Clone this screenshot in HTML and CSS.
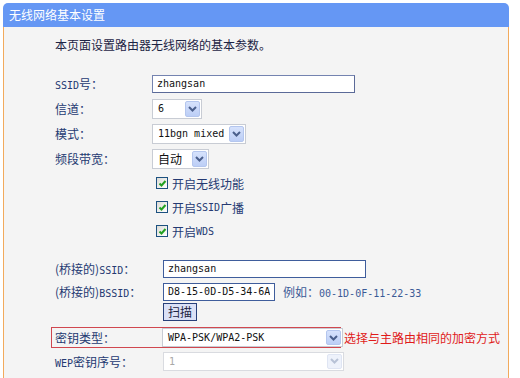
FILE: index.html
```html
<!DOCTYPE html>
<html lang="zh-CN">
<head>
  <meta charset="UTF-8" />
  <meta name="viewport" content="width=device-width, initial-scale=1.0"/>
  <title>无线网络基本设置</title>
  <link rel="stylesheet" href="styles.css">
</head>
<body>

  <div class="panel">
    <div class="panel-title">无线网络基本设置</div>

    <div class="panel-body">
      <p class="intro">本页面设置路由器无线网络的基本参数。</p>

      <div class="row">
        <label class="row-label" for="ssid"><span class="en">SSID</span>号：</label>
        <input class="text-input ssid-input" type="text" id="ssid" value="zhangsan" />
      </div>

      <div class="row">
        <label class="row-label">信道：</label>
        <div class="select channel-select">
          <span class="select-text en">6</span>
          <span class="select-btn"><svg width="9" height="6" viewBox="0 0 9 6"><path d="M1 1 L4.5 4.5 L8 1" fill="none" stroke="#4a5f8c" stroke-width="2"/></svg></span>
        </div>
      </div>

      <div class="row">
        <label class="row-label">模式：</label>
        <div class="select mode-select">
          <span class="select-text en">11bgn mixed</span>
          <span class="select-btn"><svg width="9" height="6" viewBox="0 0 9 6"><path d="M1 1 L4.5 4.5 L8 1" fill="none" stroke="#4a5f8c" stroke-width="2"/></svg></span>
        </div>
      </div>

      <div class="row">
        <label class="row-label">频段带宽：</label>
        <div class="select band-select">
          <span class="select-text">自动</span>
          <span class="select-btn"><svg width="9" height="6" viewBox="0 0 9 6"><path d="M1 1 L4.5 4.5 L8 1" fill="none" stroke="#4a5f8c" stroke-width="2"/></svg></span>
        </div>
      </div>

      <div class="row check-row">
        <span class="row-label"></span>
        <label class="check"><span class="box"><svg width="9" height="9" viewBox="0 0 9 9"><path d="M1.5 4.5 L3.5 6.5 L7.5 2" fill="none" stroke="#21a121" stroke-width="2"/></svg></span>开启无线功能</label>
      </div>
      <div class="row check-row">
        <span class="row-label"></span>
        <label class="check"><span class="box"><svg width="9" height="9" viewBox="0 0 9 9"><path d="M1.5 4.5 L3.5 6.5 L7.5 2" fill="none" stroke="#21a121" stroke-width="2"/></svg></span>开启<span class="en">SSID</span>广播</label>
      </div>
      <div class="row check-row">
        <span class="row-label"></span>
        <label class="check"><span class="box"><svg width="9" height="9" viewBox="0 0 9 9"><path d="M1.5 4.5 L3.5 6.5 L7.5 2" fill="none" stroke="#21a121" stroke-width="2"/></svg></span>开启<span class="en">WDS</span></label>
      </div>

      <div class="wds">
        <div class="row bridge-row first">
          <label class="row-label" for="bssid-name">(桥接的)<span class="en">SSID</span>：</label>
          <input class="text-input bridge-ssid" type="text" id="bssid-name" value="zhangsan" />
        </div>

        <div class="row bridge-row">
          <label class="row-label" for="bssid">(桥接的)<span class="en">BSSID</span>：</label>
          <input class="text-input bssid-input" type="text" id="bssid" value="D8-15-0D-D5-34-6A" />
          <span class="hint">例如：<span class="en">00-1D-0F-11-22-33</span></span>
        </div>

        <div class="row scan-row">
          <span class="row-label"></span>
          <button type="button" class="scan-btn">扫描</button>
        </div>

        <div class="row key-row">
          <div class="key-box">
            <label class="row-label">密钥类型：</label>
            <div class="select key-select">
              <span class="select-text en">WPA-PSK/WPA2-PSK</span>
              <span class="select-btn"><svg width="9" height="6" viewBox="0 0 9 6"><path d="M1 1 L4.5 4.5 L8 1" fill="none" stroke="#4a5f8c" stroke-width="2"/></svg></span>
            </div>
          </div>
          <span class="key-note">选择与主路由相同的加密方式</span>
        </div>

        <div class="row wep-row">
          <label class="row-label"><span class="en">WEP</span>密钥序号：</label>
          <div class="select key-select disabled">
            <span class="select-text en">1</span>
            <span class="select-btn"><svg width="9" height="6" viewBox="0 0 9 6"><path d="M1 1 L4.5 4.5 L8 1" fill="none" stroke="#b8c2d6" stroke-width="2"/></svg></span>
          </div>
        </div>

        <div class="row next-row">
          <span class="row-label"></span>
          <div class="select key-select disabled"></div>
        </div>
      </div>
    </div>
  </div>

</body>
</html>
```

FILE: styles.css
```css
html, body {
  margin: 0;
  padding: 0;
}

body {
  background: #ffffff;
  font-family: "Noto Sans CJK SC", "Liberation Sans", sans-serif;
  font-size: 12px;
  color: #253a72;
  overflow: hidden;
}

.en {
  font-family: "DejaVu Sans Mono", "Liberation Mono", monospace;
  font-size: 10px;
}

.panel {
  width: 506px;
  margin: 3px 0 0 3px;
}

.panel-title {
  height: 24px;
  line-height: 24px;
  background: #6597f4;
  color: #ffffff;
  padding-left: 6px;
  border-radius: 5px 5px 0 0;
}

.panel-body {
  background: #f4f4f4;
  border-left: 1px solid #f2aa5c;
  border-right: 1px solid #f2aa5c;
  padding: 10px 0 20px 51px;
}

.intro {
  margin: 0 0 18px;
  line-height: 16px;
  color: #1d2444;
}

.row {
  display: flex;
  align-items: center;
  height: 25px;
}

.row-label {
  flex: 0 0 97px;
  white-space: nowrap;
}

.text-input {
  box-sizing: border-box;
  height: 18px;
  margin: 0;
  padding: 0 4px;
  border: 1px solid #7483b0;
  border-right-color: #5b6a98;
  border-bottom-color: #5b6a98;
  background: #ffffff;
  font-family: "DejaVu Sans Mono", "Liberation Mono", monospace;
  font-size: 10px;
  color: #111111;
  outline: none;
}

.ssid-input {
  width: 203px;
}

/* fake select, XP style */
.select {
  box-sizing: border-box;
  display: flex;
  align-items: center;
  height: 20px;
  border: 1px solid #c8ccd4;
  background: #ffffff;
  padding: 1px;
}

.select-text {
  flex: 1;
  padding-left: 4px;
  color: #111111;
  white-space: nowrap;
}

.select-btn {
  box-sizing: border-box;
  flex: 0 0 15px;
  height: 16px;
  display: flex;
  align-items: center;
  justify-content: center;
  background: linear-gradient(#d6e2fc, #bccef6);
  border: 1px solid #b4c6ee;
  border-radius: 2px;
}

.channel-select { width: 50px; }
.mode-select { width: 94px; }
.band-select { width: 57px; }

.check-row {
  height: 24px;
}

.check {
  display: flex;
  align-items: center;
  margin-left: 4px;
}

.box {
  box-sizing: border-box;
  width: 12px;
  height: 12px;
  margin-right: 4px;
  border: 1px solid #1c5180;
  background: linear-gradient(135deg, #dcdcd6, #ffffff);
  display: flex;
  align-items: center;
  justify-content: center;
}

.wds {
  margin-top: 14px;
}

.bridge-row {
  height: 23px;
}

.wds .row-label {
  flex-basis: 108px;
}

.bridge-row .text-input {
  border-color: #3f5d9c;
}

.bridge-ssid {
  width: 203px;
}

.bssid-input {
  width: 112px;
}

.hint {
  margin-left: 8px;
  color: #3b5a96;
}

.scan-row {
  height: 19px;
  align-items: flex-start;
}

.scan-btn {
  height: 18px;
  width: 34px;
  padding: 0;
  border: 1px solid #28407a;
  background: #dbe1f6;
  font-family: "Noto Sans CJK SC", sans-serif;
  font-size: 12px;
  line-height: 14px;
  color: #1d2444;
}

.key-row {
  height: 21px;
  margin-top: 5px;
  margin-left: -4px;
}

.key-box {
  box-sizing: border-box;
  display: flex;
  align-items: center;
  width: 290px;
  height: 21px;
  padding-left: 3px;
  border: 1px solid #d0474f;
}

.key-box .row-label {
  flex-basis: 107px;
}

.key-select {
  flex: 0 0 181px;
  width: 181px;
  height: 19px;
}

.key-select .select-btn {
  height: 15px;
}

.key-note {
  margin-left: 3px;
  color: #e01a1a;
}

.wep-row {
  height: 22px;
  margin-top: 2px;
}

.disabled {
  border-color: #d9dbe0;
}

.disabled .select-text {
  color: #a8a8a8;
}

.disabled .select-btn {
  background: #eef2fb;
  border-color: #dfe5f3;
}

.next-row {
  margin-top: 3px;
}
```
